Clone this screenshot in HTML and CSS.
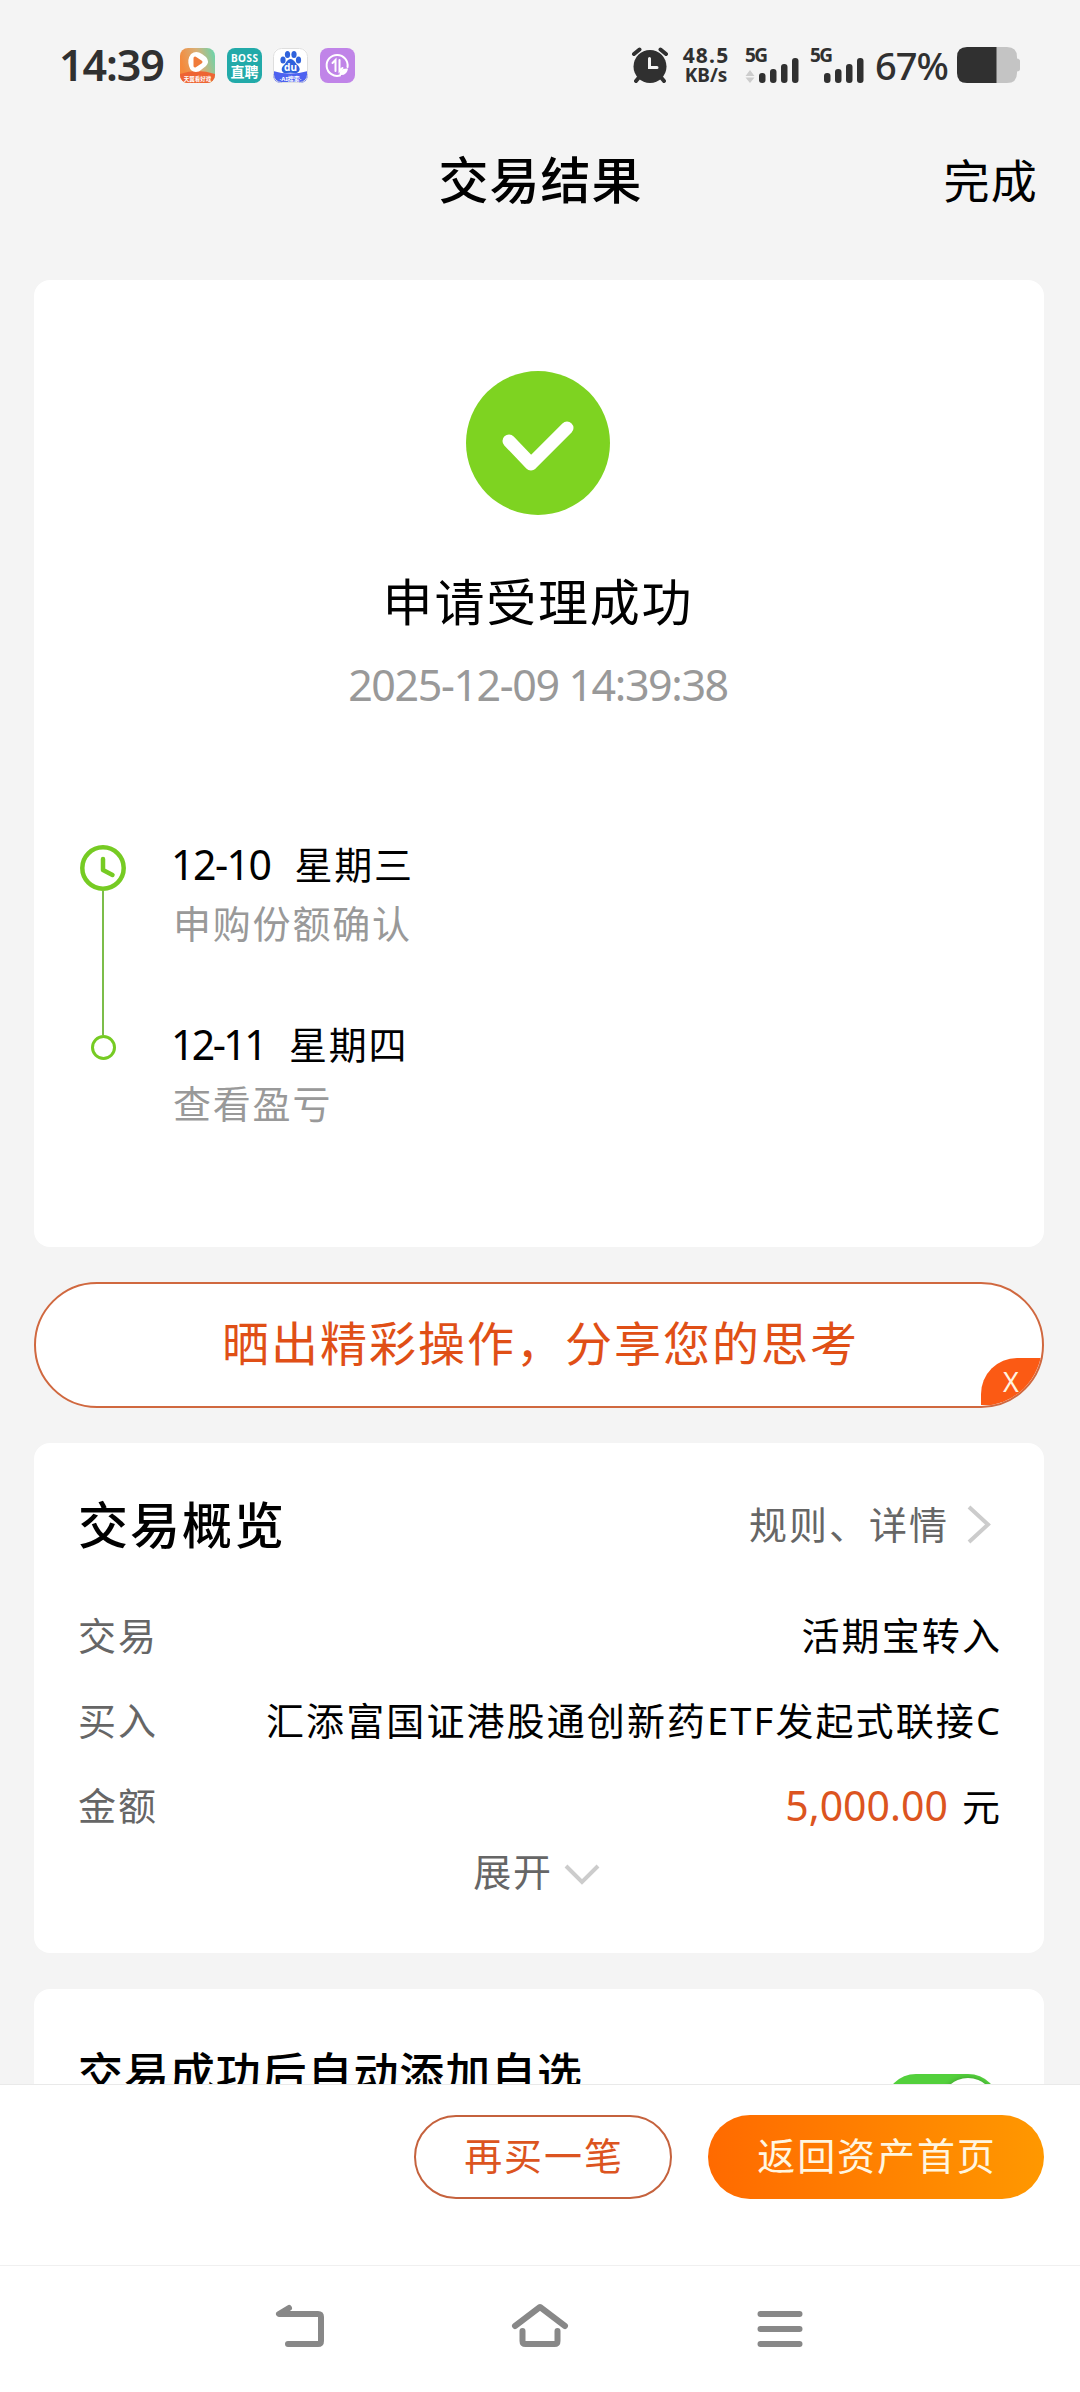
FILE: index.html
```html
<!DOCTYPE html>
<html lang="zh-CN">
<head>
    <meta charset="UTF-8">
    <meta name="viewport" content="width=device-width, initial-scale=1.0">
    <title>交易结果</title>
    <link rel="stylesheet" href="styles.css">
</head>
<body>
    <div class="phone">
        <!-- Status bar -->
        <div class="status-bar">
            <span class="time">14:39</span>
            <div class="app-icons">
                <svg width="35" height="35" viewBox="0 0 35 35">
                    <defs>
                        <linearGradient id="video-bg" x1="0" y1="0.3" x2="1" y2="0">
                            <stop offset="0" stop-color="#f58a3c"/>
                            <stop offset="0.5" stop-color="#d8b078"/>
                            <stop offset="1" stop-color="#5fd8b0"/>
                        </linearGradient>
                        <clipPath id="icon-clip"><rect width="35" height="35" rx="8"/></clipPath>
                    </defs>
                    <g clip-path="url(#icon-clip)">
                        <rect width="35" height="35" fill="url(#video-bg)"/>
                        <path d="M0 26Q17 20 35 26V35H0z" fill="#ee6433"/>
                        <path d="M11 6Q16 2 22 6L26 9Q30 13.500 26 18L19 23.500Q11 25.500 9 18Q7 11 11 6z" fill="#fff"/>
                        <path d="M15 10L21 14L15 18z" fill="#f07c3c" stroke="#f07c3c" stroke-width="3" stroke-linejoin="round"/>
                        <text x="17.500" y="32.500" class="icon-text" font-size="5.500">天翼看好戏</text>
                    </g>
                </svg>
                <svg width="35" height="35" viewBox="0 0 35 35">
                    <rect width="35" height="35" rx="8" fill="#22aaa9"/>
                    <text x="17.500" y="13.500" class="icon-text" font-size="10" textLength="27">BOSS</text>
                    <text x="17.500" y="28.500" class="icon-text" font-size="14">直聘</text>
                </svg>
                <svg width="35" height="35" viewBox="0 0 35 35">
                    <g clip-path="url(#icon-clip)">
                        <rect width="35" height="35" fill="#fff"/>
                        <path d="M0 23Q17 28 35 23V35H0z" fill="#4e62f0"/>
                    </g>
                    <rect x="0.500" y="0.500" width="34" height="34" rx="8" fill="none" stroke="#dedede"/>
                    <g fill="#2f62dc">
                        <ellipse cx="10" cy="12" rx="2.600" ry="3.500"/>
                        <ellipse cx="14.500" cy="6.500" rx="2.600" ry="3.600"/>
                        <ellipse cx="21" cy="6.500" rx="2.600" ry="3.600"/>
                        <ellipse cx="25.500" cy="12" rx="2.600" ry="3.500"/>
                        <path d="M17.500 11C21 11 22 15 25 17.500C29 22 25 26 21 25Q17.500 24.300 14 25C9 26 7 21 10.500 17.500C13.500 15 14 11 17.500 11z"/>
                    </g>
                    <text x="17.500" y="22.500" class="icon-text" font-size="10">du</text>
                    <text x="17.500" y="32.500" class="icon-text" font-size="6">·AI搜索·</text>
                </svg>
                <svg width="35" height="35" viewBox="0 0 35 35">
                    <rect width="35" height="35" rx="8" fill="#c084e8"/>
                    <g fill="none" stroke="#fff" stroke-width="2" stroke-linecap="round">
                        <path d="M27.500 19A10.500 10.500 0 1 0 20 27.500"/>
                        <path d="M12.500 15L15.500 12V23M19.500 12V23L22.500 20"/>
                    </g>
                    <path d="M19.500 27Q18.500 20 28 20.500Q27 28 19.500 27z" fill="#fff"/>
                </svg>
            </div>
            <div class="status-right">
                <svg width="38" height="37" viewBox="0 0 38 37">
                    <g stroke="#303030" stroke-width="4" stroke-linecap="round">
                        <path d="M3 7L8.500 2.500M29.500 2.500L35 7M7.500 31L5 34M30.500 31L33 34"/>
                    </g>
                    <circle cx="19" cy="19.500" r="16.500" fill="#303030"/>
                    <path d="M18.500 11.500V20.500H26" fill="none" stroke="#f4f4f4" stroke-width="3" stroke-linecap="round"/>
                </svg>
                <div class="speed">
                    <span>48.5</span>
                    <span class="unit">KB/s</span>
                </div>
                <svg class="signal" width="54" height="37" viewBox="0 0 54 37">
                    <text x="0" y="15" class="signal-text" textLength="23">5G</text>
                    <path d="M5 23L9.500 29H0.500zM5 36L9.500 30.500H0.500z" fill="#ccc"/>
                    <g fill="#303030">
                        <rect x="14" y="26" width="6.500" height="10" rx="3"/>
                        <rect x="25" y="22" width="6.500" height="14" rx="3"/>
                        <rect x="36" y="17" width="6.500" height="19" rx="3"/>
                        <rect x="47" y="11" width="6.500" height="25" rx="3"/>
                    </g>
                </svg>
                <svg class="signal" width="54" height="37" viewBox="0 0 54 37">
                    <text x="0" y="15" class="signal-text" textLength="23">5G</text>
                    <g fill="#303030">
                        <rect x="14" y="26" width="6.500" height="10" rx="3"/>
                        <rect x="25" y="22" width="6.500" height="14" rx="3"/>
                        <rect x="36" y="17" width="6.500" height="19" rx="3"/>
                        <rect x="47" y="11" width="6.500" height="25" rx="3"/>
                    </g>
                </svg>
                <span class="percent">67%</span>
                <svg width="63" height="36" viewBox="0 0 63 36">
                    <path d="M39 0H50Q60 0 60 10V11.500Q63 12 63 14V22Q63 24 60 24.500V26Q60 36 50 36H39z" fill="#c4c4c4"/>
                    <path d="M39.500 0V36H10Q0 36 0 26V10Q0 0 10 0z" fill="#303030"/>
                </svg>
            </div>
        </div>

        <!-- Title bar -->
        <div class="header">
            <span></span>
            <h1>交易结果</h1>
            <a class="done">完成</a>
        </div>

        <div class="content">
            <!-- Result -->
            <div class="card result-card">
                <svg class="result-icon" width="144" height="144" viewBox="0 0 144 144">
                    <circle cx="72" cy="72" r="72" fill="#7ed321"/>
                    <path d="M43 70L65 93L101 57" fill="none" stroke="#fff" stroke-width="13" stroke-linecap="round" stroke-linejoin="round"/>
                </svg>
                <h2>申请受理成功</h2>
                <p class="result-time">2025-12-09 14:39:38</p>

                <div class="timeline">
                    <div class="timeline-marks">
                        <svg width="46" height="46" viewBox="0 0 46 46" fill="none" stroke="#76cb23">
                            <circle cx="23" cy="23" r="20.700" stroke-width="4.500"/>
                            <path d="M23 14V25L32.500 30" stroke-width="4.500" stroke-linecap="round" stroke-linejoin="round"/>
                        </svg>
                        <div class="timeline-line"></div>
                        <div class="timeline-dot"></div>
                    </div>
                    <div class="timeline-text">
                        <div class="step">
                            <p class="step-date"><span class="day">12-10</span><span>星期三</span></p>
                            <p class="step-note">申购份额确认</p>
                        </div>
                        <div class="step">
                            <p class="step-date"><span class="day">12-11</span><span>星期四</span></p>
                            <p class="step-note">查看盈亏</p>
                        </div>
                    </div>
                </div>
            </div>

            <!-- Share banner -->
            <div class="share">
                <span>晒出精彩操作，分享您的思考</span>
                <span class="share-close">X</span>
            </div>

            <!-- Overview -->
            <div class="card overview-card">
                <div class="overview-head">
                    <h3>交易概览</h3>
                    <a class="rules">规则、详情
                        <svg width="24" height="40" viewBox="0 0 24 40"><path d="M2 3L21 20.500L2 38" fill="none" stroke="#ccc" stroke-width="4"/></svg>
                    </a>
                </div>
                <div class="row"><span class="label">交易</span><span>活期宝转入</span></div>
                <div class="row"><span class="label">买入</span><span>汇添富国证港股通创新药ETF发起式联接C</span></div>
                <div class="row"><span class="label">金额</span><span><span class="amount">5,000.00</span>元</span></div>
                <div class="expand">展开
                    <svg width="36" height="24" viewBox="0 0 36 24"><path d="M2 4L18 20L34 4" fill="none" stroke="#ccc" stroke-width="4"/></svg>
                </div>
            </div>

            <!-- Auto add -->
            <div class="card favorite-card">
                <h4>交易成功后自动添加自选</h4>
                <div class="toggle"></div>
            </div>
        </div>

        <div class="footer">
            <button class="btn btn-outline">再买一笔</button>
            <button class="btn btn-primary">返回资产首页</button>
        </div>

        <!-- System navigation -->
        <div class="nav-bar">
            <svg width="60" height="60" viewBox="0 0 60 60">
                <path d="M19 12L9 18H48Q51 18 51 21V45Q51 48 48 48H18"/>
            </svg>
            <svg width="60" height="60" viewBox="0 0 60 60">
                <path d="M5 30L30 11L55 30M12.500 35V45Q12.500 48 15.500 48H44.500Q47.500 48 47.500 45V35"/>
            </svg>
            <svg width="60" height="60" viewBox="0 0 60 60">
                <path d="M10.500 18H49.500M10.500 33H49.500M10.500 48H49.500"/>
            </svg>
        </div>
    </div>
</body>
</html>
```
FILE: styles.css
```css
* {
    box-sizing: border-box;
    margin: 0;
    padding: 0;
}

body {
    font-family: "Noto Sans", "Noto Sans CJK SC", sans-serif;
    background: #f4f4f4;
    color: #000;
}

svg {
    display: block;
    flex-shrink: 0;
}

.phone {
    width: 1080px;
    height: 2392px;
    display: flex;
    flex-direction: column;
    overflow: hidden;
}

/* status bar */
.status-bar {
    height: 130px;
    padding: 0 60px 0 59px;
    display: flex;
    align-items: center;
    color: #303030;
    flex-shrink: 0;
}

.time {
    width: 121px;
    font-size: 43px;
    font-weight: 600;
    line-height: 60px;
    letter-spacing: -1.1px;
}

.app-icons {
    display: flex;
    gap: 11.7px;
}

.icon-text {
    fill: #fff;
    font-weight: 700;
    text-anchor: middle;
}

.status-right {
    margin-left: auto;
    display: flex;
    align-items: center;
}

.speed {
    width: 50px;
    margin-left: 12px;
    margin-right: 14px;
    display: flex;
    flex-direction: column;
    align-items: center;
    font-size: 21px;
    font-weight: 700;
    line-height: 20px;
    letter-spacing: 1.2px;
}

.speed .unit {
    font-size: 19px;
    letter-spacing: 0;
}

.signal {
    margin-right: 11px;
    overflow: visible;
}

.signal-text {
    font-size: 19px;
    font-weight: 700;
    fill: #303030;
}

.percent {
    width: 82px;
    font-size: 38px;
    font-weight: 500;
    line-height: 60px;
    letter-spacing: -1px;
}

/* title bar */
.header {
    height: 100px;
    margin-bottom: 50px;
    padding: 0 42px 0 43px;
    display: grid;
    grid-template-columns: 1fr auto 1fr;
    align-items: center;
    flex-shrink: 0;
}

.header h1 {
    font-size: 50px;
    font-weight: 500;
    line-height: 98px;
    letter-spacing: 1px;
}

.done {
    justify-self: end;
    font-size: 46px;
    line-height: 100px;
    letter-spacing: 1.3px;
}

/* cards */
.content {
    flex: 1;
    min-height: 0;
    overflow: hidden;
    padding: 0 36px 0 34px;
}

.card {
    background: #fff;
    border-radius: 16px;
    padding: 0 42px 0 44px;
}

.result-card {
    height: 967px;
    padding-top: 91px;
    padding-right: 46px;
}

.result-icon {
    margin: 0 auto;
}

.result-card h2 {
    margin-top: 52px;
    text-align: center;
    font-size: 50px;
    font-weight: 400;
    line-height: 70px;
    letter-spacing: 1.8px;
}

.result-time {
    margin-top: 23px;
    text-align: center;
    color: #999;
    font-size: 43px;
    line-height: 50px;
    letter-spacing: -1.4px;
}

.timeline {
    margin-top: 124px;
    margin-left: 2px;
    display: flex;
    gap: 47px;
}

.timeline-marks {
    width: 46px;
    padding-top: 11px;
    display: flex;
    flex-direction: column;
    align-items: center;
}

.timeline-line {
    width: 2px;
    height: 144px;
    background: #7cbd4a;
}

.timeline-dot {
    width: 25px;
    height: 25px;
    border: 3px solid #76cb23;
    border-radius: 50%;
}

.step {
    margin-bottom: 60px;
    font-size: 38px;
    line-height: 60px;
    letter-spacing: 1.8px;
}

.step-date {
    margin-left: -2px;
    display: flex;
    gap: 24px;
}

.day {
    font-size: 41px;
    letter-spacing: -1.5px;
}

.step:last-child .day {
    letter-spacing: -2.6px;
}

.step-note {
    color: #999;
    line-height: 58px;
    margin-bottom: 62px;
}

/* share banner */
.share {
    position: relative;
    height: 126px;
    margin: 35px 0;
    padding-left: 3px;
    border: 2px solid #d0683f;
    border-radius: 63px;
    background: #fff;
    color: #e04f16;
    overflow: hidden;
    text-align: center;
    font-size: 47px;
    line-height: 119px;
    letter-spacing: 2px;
}

.share-close {
    position: absolute;
    right: -1px;
    bottom: 1px;
    width: 62px;
    height: 47px;
    padding-right: 2px;
    border-top-left-radius: 36px;
    background: #fb5a14;
    color: #fff3e0;
    font-size: 27px;
    line-height: 47px;
    letter-spacing: 0;
}

/* overview */
.overview-card {
    height: 510px;
    padding-top: 39px;
    font-size: 38px;
}

.overview-head {
    display: flex;
    justify-content: space-between;
    align-items: center;
    height: 80px;
    margin-bottom: 31px;
}

.overview-head h3 {
    font-size: 50px;
    font-weight: 500;
    letter-spacing: 2px;
}

.rules {
    display: flex;
    align-items: center;
    gap: 18px;
    padding-right: 11px;
    color: #666;
    letter-spacing: 2px;
}

.rules svg {
    margin-top: 3px;
}

.row {
    display: flex;
    justify-content: space-between;
    line-height: 85px;
    letter-spacing: 2.1px;
}

.label {
    color: #666;
}

.amount {
    margin-right: 14px;
    color: #dc5420;
    font-size: 41px;
    letter-spacing: 0;
}

.expand {
    display: flex;
    justify-content: center;
    align-items: center;
    gap: 11px;
    padding-right: 7px;
    color: #666;
    line-height: 44px;
    letter-spacing: 1.7px;
}

.expand svg {
    margin-top: 5px;
}

/* auto add */
.favorite-card {
    height: 220px;
    margin-top: 36px;
    padding-top: 45px;
    display: flex;
    justify-content: space-between;
    align-items: flex-start;
}

.favorite-card h4 {
    font-size: 45px;
    font-weight: 500;
    line-height: 80px;
    letter-spacing: 0.9px;
}

.toggle {
    width: 114px;
    height: 62px;
    margin-top: 40px;
    margin-right: 3px;
    padding: 4px;
    border-radius: 31px;
    background: #53d03c;
    display: flex;
    justify-content: flex-end;
}

.toggle::after {
    content: "";
    width: 54px;
    height: 54px;
    border-radius: 50%;
    background: #fff;
    box-shadow: 0 0 5px rgba(0, 0, 0, 0.3);
}

/* footer */
.footer {
    height: 181px;
    padding: 30px 36px 0 0;
    border-top: 1px solid #e9e9e9;
    background: #fff;
    display: flex;
    justify-content: flex-end;
    gap: 36px;
    flex-shrink: 0;
}

.btn {
    height: 84px;
    padding-bottom: 7px;
    padding-left: 2px;
    border: none;
    border-radius: 42px;
    font-family: inherit;
    font-size: 38px;
    letter-spacing: 1.9px;
}

.btn-outline {
    width: 258px;
    border: 2px solid #c5623d;
    background: #fff;
    color: #dc5420;
}

.btn-primary {
    width: 336px;
    background: linear-gradient(90deg, #ff6a00, #ff9800);
    color: #fff6e0;
}

/* system navigation */
.nav-bar {
    height: 127px;
    padding-top: 30px;
    border-top: 1px solid #f0f0f0;
    background: #fff;
    display: flex;
    justify-content: center;
    gap: 180px;
    flex-shrink: 0;
}

.nav-bar svg {
    fill: none;
    stroke: #888;
    stroke-width: 6;
    stroke-linecap: round;
    stroke-linejoin: round;
}
```
